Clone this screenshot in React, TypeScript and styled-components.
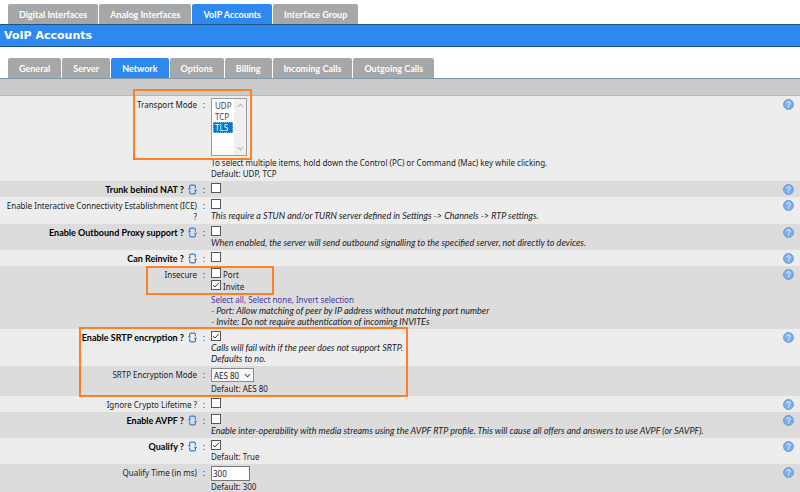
import React from 'react';
import styled, { createGlobalStyle, css } from 'styled-components';

const GlobalStyle = createGlobalStyle`
  *, *::before, *::after { box-sizing: border-box; }
  body {
    margin: 0;
    background: #fff;
    color: #222;
    font: 8px/11px "Noto Sans", "Open Sans", sans-serif;
  }
  input, select, button { font: inherit; color: inherit; margin: 0; }
`;

const Page = styled.main`
  display: flex;
  flex-direction: column;
  overflow: hidden;
`;

const TabBar = styled.nav<{ $top: number }>`
  display: flex;
  gap: 1px;
  padding: ${(p) => p.$top}px 8px 0;
`;

const Tab = styled.button<{ $active?: boolean }>`
  height: 20px;
  padding: 1px 11px 0;
  border: 0;
  border-radius: 2px 2px 0 0;
  background: ${(p) => (p.$active ? '#2d89ef' : '#a5a7a8')};
  color: #fff;
  font: 700 9px/11px Lato, sans-serif;
  white-space: nowrap;
  cursor: pointer;
`;

const Title = styled.h1`
  margin: 0;
  padding: 0 4px;
  border: solid #1f5585;
  border-width: 1px 0;
  background: #2d89ef;
  color: #fff;
  font: 700 11px/21px "DejaVu Sans", sans-serif;
`;

const Strip = styled.div`
  height: 18px;
  border-top: 1px solid #8095a6;
  border-bottom: 1px solid #b8b8b8;
  background: #cacaca;
`;

const Form = styled.form`
  display: flex;
  flex-direction: column;
`;

const Row = styled.div`
  position: relative;
  display: grid;
  grid-template-columns: 202px 9px 1fr 17px;
  min-height: 16px;
  background: #ededed;
  &:nth-child(even) { background: #dcdcdc; }
`;

const Label = styled.label<{ $bold?: boolean }>`
  display: flex;
  justify-content: flex-end;
  gap: 4px;
  padding: 3px 5px 2px 0;
  text-align: right;
  white-space: nowrap;
  ${(p) => p.$bold && css`color: #000; font: 700 9px/11px Lato, sans-serif;`}
`;

const Colon = styled.span`
  padding: 3px 0 0 1px;
`;

const Field = styled.div`
  display: flex;
  flex-direction: column;
  align-items: flex-start;
  padding: 2px 0;
`;

const Help = styled.button`
  width: 11px;
  height: 11px;
  margin-top: 3px;
  padding: 0;
  border: 0;
  background: none;
  cursor: pointer;
  svg { display: block; }
`;

const Note = styled.p<{ $italic?: boolean }>`
  margin: 0;
  white-space: nowrap;
  ${(p) => p.$italic && css`font: italic 9px/11px Lato, sans-serif;`}
`;

const Links = styled.p`
  margin: 2px 0 0;
  color: #44399c;
  a { color: inherit; text-decoration: none; }
`;

const CheckBox = styled.span`
  position: relative;
  display: block;
  width: 10px;
  height: 10px;
  margin-bottom: 1px;
  input {
    display: block;
    width: 10px;
    height: 10px;
    appearance: none;
    border: 1px solid #555;
    background: #fff;
  }
  svg { position: absolute; inset: 0; display: none; pointer-events: none; }
  input:checked + svg { display: block; }
`;

const CheckLine = styled.label`
  display: flex;
  align-items: flex-start;
  gap: 2px;
  height: 12px;
  line-height: 13px;
`;

const ListFrame = styled.span`
  display: flex;
  width: 36px;
  height: 58px;
  margin-bottom: 1px;
  border: 1px solid #999da8;
  background: #fff;
`;

const ListBox = styled.select`
  flex: 1;
  min-width: 0;
  height: 56px;
  padding: 1px;
  border: 0;
  outline: 0;
  background: #fff;
  overflow: hidden;
  scrollbar-width: none;
  option {
    min-height: 11px;
    padding: 0 2px;
    line-height: 11px;
    color: #444;
  }
  option:checked {
    background: #0078d7 linear-gradient(#0078d7, #0078d7);
    color: #fff;
    outline: 1px dotted #8ec5f0;
    outline-offset: -1px;
  }
`;

const ListScroll = styled.span`
  display: flex;
  flex-direction: column;
  justify-content: space-between;
  align-items: center;
  width: 12px;
  padding: 4px 0;
  background: #f0f0f0;
`;

const DropFrame = styled.span`
  position: relative;
  display: block;
  width: 43px;
  margin-bottom: 1px;
  svg { position: absolute; right: 3px; top: 5px; pointer-events: none; }
`;

const Drop = styled.select`
  display: block;
  width: 100%;
  height: 14px;
  padding: 0 2px;
  appearance: none;
  border: 1px solid #8a8a8a;
  border-radius: 0;
  background: #f8f8f8;
`;

const TextBox = styled.input`
  width: 39px;
  height: 15px;
  padding: 0 1px;
  border: 1px solid #777;
  background: #fff;
`;

const Highlight = styled.span<{ $x: number; $y: number; $w: number; $h: number }>`
  position: absolute;
  z-index: 1;
  left: ${(p) => p.$x}px;
  top: ${(p) => p.$y}px;
  width: ${(p) => p.$w}px;
  height: ${(p) => p.$h}px;
  border: 2px solid #ff7f27;
  pointer-events: none;
`;

const ResetIcon = () => (
  <svg width="9" height="11" viewBox="0 0 9 11" fill="none" stroke="#3a80cf" strokeWidth="1.2" aria-hidden="true">
    <path d="M1.6 5V2.6Q1.6 1.2 3 1.2H5.8Q7.4 1.2 7.4 2.8V4.4" />
    <path d="M7.4 6.6V8.4Q7.4 9.8 6 9.8H3.2Q1.6 9.8 1.6 8.2V6.6" />
    <path d="M.2 4.8H2.6M6.4 6.4H8.8" />
  </svg>
);

const HelpIcon = () => (
  <svg width="11" height="11" viewBox="0 0 11 11" aria-hidden="true">
    <circle cx="5.5" cy="5.5" r="4.9" fill="#7fb0ee" stroke="#6595d6" strokeWidth="1" />
    <path d="M3.9 4.3C3.9 2.2 7.2 2.3 7.1 4.2C7.1 5.3 5.6 5.3 5.6 6.6M5.6 7.5V8.6" fill="none" stroke="#fff" strokeWidth="1" />
  </svg>
);

const Chevron = ({ up, color }: { up?: boolean; color: string }) => (
  <svg width="7" height="5" viewBox="0 0 8 5" fill="none" stroke={color} strokeWidth="1.2" aria-hidden="true">
    <path d={up ? 'M1 4L4 1L7 4' : 'M1 1L4 4L7 1'} />
  </svg>
);

const Check = ({ id, checked }: { id: string; checked?: boolean }) => (
  <CheckBox>
    <input type="checkbox" id={id} defaultChecked={checked} />
    <svg width="10" height="10" viewBox="0 0 10 10" fill="none" stroke="#333" strokeWidth="1" aria-hidden="true">
      <path d="M2 5L4 7L8 2.7" />
    </svg>
  </CheckBox>
);

type SettingProps = {
  id: string;
  label: React.ReactNode;
  reset?: boolean;
  help?: boolean;
  children: React.ReactNode;
  mark?: React.ReactNode;
};

const Setting = ({ id, label, reset, help = true, children, mark }: SettingProps) => (
  <Row>
    <Label htmlFor={id} $bold={reset}>
      <span>{label}</span>
      {reset && <ResetIcon />}
    </Label>
    <Colon>:</Colon>
    <Field>{children}</Field>
    {help && <Help type="button" aria-label="Help"><HelpIcon /></Help>}
    {mark}
  </Row>
);

const sections = ['Digital Interfaces', 'Analog Interfaces', 'VoIP Accounts', 'Interface Group'];
const pages = ['General', 'Server', 'Network', 'Options', 'Billing', 'Incoming Calls', 'Outgoing Calls'];

export default function App() {
  return (
    <Page>
      <GlobalStyle />
      <TabBar $top={4}>
        {sections.map((s) => <Tab key={s} type="button" $active={s === 'VoIP Accounts'}>{s}</Tab>)}
      </TabBar>
      <Title>VoIP Accounts</Title>
      <TabBar $top={11}>
        {pages.map((s) => <Tab key={s} type="button" $active={s === 'Network'}>{s}</Tab>)}
      </TabBar>
      <Strip />
      <Form>
        <Setting id="transport" label="Transport Mode" mark={<Highlight $x={133} $y={-7} $w={119} $h={71} />}>
          <ListFrame>
            <ListBox id="transport" multiple size={5} defaultValue={['TLS']}>
              <option>UDP</option>
              <option>TCP</option>
              <option>TLS</option>
            </ListBox>
            <ListScroll>
              <Chevron up color="#b4b4b4" />
              <Chevron color="#b4b4b4" />
            </ListScroll>
          </ListFrame>
          <Note>To select multiple items, hold down the Control (PC) or Command (Mac) key while clicking.</Note>
          <Note>Default: UDP, TCP</Note>
        </Setting>
        <Setting id="nat" label="Trunk behind NAT ?" reset><Check id="nat" /></Setting>
        <Setting id="ice" label={<>Enable Interactive Connectivity Establishment (ICE)<br />?</>}>
          <Check id="ice" />
          <Note $italic>This require a STUN and/or TURN server defined in Settings -&gt; Channels -&gt; RTP settings.</Note>
        </Setting>
        <Setting id="proxy" label="Enable Outbound Proxy support ?" reset>
          <Check id="proxy" />
          <Note $italic>When enabled, the server will send outbound signalling to the specified server, not directly to devices.</Note>
        </Setting>
        <Setting id="reinvite" label="Can Reinvite ?" reset><Check id="reinvite" /></Setting>
        <Setting id="port" label="Insecure" mark={<Highlight $x={146} $y={0} $w={128} $h={29} />}>
          <CheckLine><Check id="port" />Port</CheckLine>
          <CheckLine><Check id="invite" checked />Invite</CheckLine>
          <Links><a href="#all">Select all</a>, <a href="#none">Select none</a>, <a href="#invert">Invert selection</a></Links>
          <Note $italic>- Port: Allow matching of peer by IP address without matching port number</Note>
          <Note $italic>- Invite: Do not require authentication of incoming INVITEs</Note>
        </Setting>
        <Setting id="srtp" label="Enable SRTP encryption ?" reset mark={<Highlight $x={79} $y={-2} $w={329} $h={70} />}>
          <Check id="srtp" checked />
          <Note $italic>Calls will fail with if the peer does not support SRTP.</Note>
          <Note $italic>Defaults to no.</Note>
        </Setting>
        <Setting id="mode" label="SRTP Encryption Mode" help={false}>
          <DropFrame>
            <Drop id="mode"><option>AES 80</option><option>AES 32</option></Drop>
            <Chevron color="#555" />
          </DropFrame>
          <Note>Default: AES 80</Note>
        </Setting>
        <Setting id="crypto" label="Ignore Crypto Lifetime ?"><Check id="crypto" /></Setting>
        <Setting id="avpf" label="Enable AVPF ?" reset>
          <Check id="avpf" />
          <Note $italic>Enable inter-operability with media streams using the AVPF RTP profile. This will cause all offers and answers to use AVPF (or SAVPF).</Note>
        </Setting>
        <Setting id="qualify" label="Qualify ?" reset>
          <Check id="qualify" checked />
          <Note>Default: True</Note>
        </Setting>
        <Setting id="qtime" label="Qualify Time (in ms)">
          <TextBox id="qtime" type="text" defaultValue="300" />
          <Note>Default: 300</Note>
        </Setting>
      </Form>
    </Page>
  );
}
